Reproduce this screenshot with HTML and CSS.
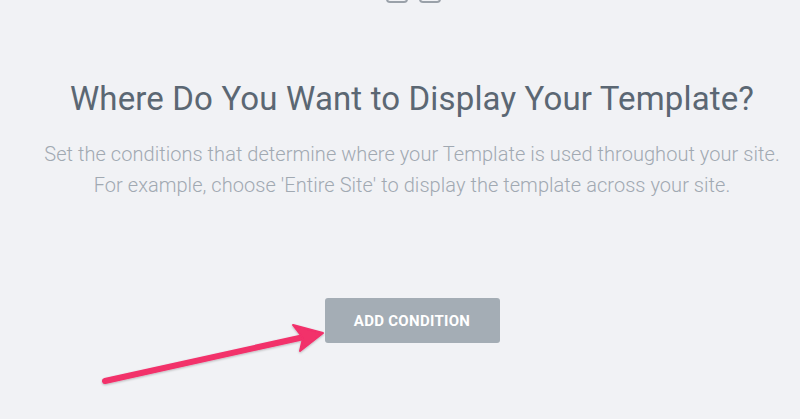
FILE: index.html
```html
<!DOCTYPE html>
<html lang="en">
<head>
    <meta charset="UTF-8">
    <title>Display Conditions</title>
    <link rel="stylesheet" href="styles.css">
</head>
<body>
    <div class="page">
        <!-- 上方被截掉的兩個圖示 -->
        <div class="top-icons">
            <span class="icon-box"></span>
            <span class="icon-box"></span>
        </div>

        <h1 class="title">Where Do You Want to Display Your Template?</h1>
        <p class="desc">
            Set the conditions that determine where your Template is used throughout your site.<br>
            For example, choose 'Entire Site' to display the template across your site.
        </p>

        <button class="add-btn" id="addConditionBtn">Add Condition</button>

        <!-- 標註用的箭頭 -->
        <svg class="pointer" width="800" height="419" viewBox="0 0 800 419">
            <defs>
                <filter id="arrowShadow" x="-10%" y="-10%" width="120%" height="130%">
                    <feDropShadow dx="0" dy="1" stdDeviation="1" flood-color="#000" flood-opacity="0.25"/>
                </filter>
            </defs>
            <g filter="url(#arrowShadow)" fill="#f2306b" stroke="#f2306b">
                <line x1="105" y1="381" x2="304" y2="337" stroke-width="6" stroke-linecap="round"/>
                <polygon points="323,333 293,325 303,338 300,351" stroke-width="2" stroke-linejoin="round"/>
            </g>
        </svg>
    </div>
</body>
</html>
```

FILE: styles.css
```css
html, body {
    margin: 0;
    height: 100%;
}
body {
    background-color: #f1f2f5;
    font-family: Roboto, 'Liberation Sans', sans-serif;
    overflow: hidden;
}
.page {
    position: relative;
    height: 100%;
    display: flex;
    flex-direction: column;
    align-items: center;
    padding-left: 24px;   /* 內容中心略偏右 */
    box-sizing: border-box;
}
.top-icons {
    display: flex;
    gap: 11px;
    margin-top: -20px;
    margin-left: 3px;
}
.icon-box {
    width: 18px;
    height: 19px;
    border: 2px solid #9aa1a9;
    border-radius: 4px;
}
.title {
    margin: 76px 0 0;
    font-size: 33px;
    font-weight: 400;
    letter-spacing: 0.15px;
    color: #5b6773;
    line-height: 40px;
    white-space: nowrap;
}
.desc {
    margin: 20px 0 0;
    font-size: 20px;
    font-weight: 300;
    letter-spacing: 0.05px;
    line-height: 31px;
    color: #a1a9b2;
    text-align: center;
    white-space: nowrap;
}
.add-btn {
    margin-top: 97px;
    width: 175px;
    height: 45px;
    border: none;
    border-radius: 3px;
    background-color: #a4adb5;
    color: #fff;
    font-family: Roboto, 'Liberation Sans', sans-serif;
    font-size: 15px;
    font-weight: 700;
    letter-spacing: 0.3px;
    text-transform: uppercase;
    cursor: pointer;
}
.pointer {
    position: absolute;
    left: 0;
    top: 0;
    pointer-events: none;
}
```
